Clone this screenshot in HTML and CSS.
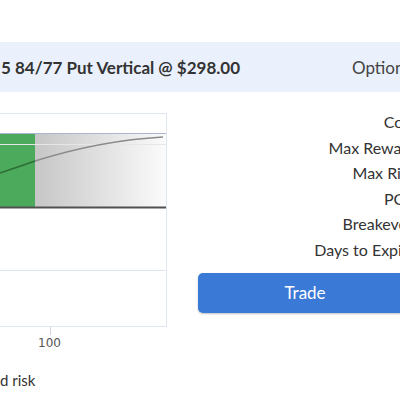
FILE: index.html
```html
<!DOCTYPE html>
<html lang="en">

<head>
    <meta charset="UTF-8">
    <meta name="viewport" content="width=device-width, initial-scale=1.0">
    <title>Put Vertical</title>
    <link rel="stylesheet" href="styles.css">
</head>

<body>
    <div class="page">
        <div class="trade-head">
            <span class="trade-title">5 84/77 Put Vertical @ $298.00</span>
            <span class="trade-type">Options</span>
        </div>

        <div class="trade-body">
            <div class="chart-col">
                <div class="chart-frame">
                    <svg width="166" height="212" viewBox="0 0 166 212">
                        <defs>
                            <linearGradient id="fade" x1="0" y1="0" x2="1" y2="0">
                                <stop offset="0" stop-color="#c6c6c6"/>
                                <stop offset="1" stop-color="#fbfbfb"/>
                            </linearGradient>
                        </defs>
                        <rect x="35" y="19" width="131" height="75" fill="url(#fade)"/>
                        <rect x="0" y="19" width="35" height="75" fill="#4caa5c"/>
                        <line x1="0" y1="19.5" x2="166" y2="19.5" stroke="#aab4d2"/>
                        <line x1="0" y1="30.5" x2="166" y2="30.5" stroke="#e6e6e6"/>
                        <line x1="0" y1="156.5" x2="166" y2="156.5" stroke="#dfe5ee"/>
                        <path d="M0 59 C 12 55, 24 51, 35 47" fill="none" stroke="#2c6d37" stroke-width="1.5"/>
                        <path d="M35 47 C 70 36, 110 26, 163 23" fill="none" stroke="#8a8a8a" stroke-width="1.5"/>
                        <line x1="0" y1="93.5" x2="166" y2="93.5" stroke="#505050" stroke-width="2"/>
                    </svg>
                </div>
                <div class="axis">
                    <span class="tick">100</span>
                </div>
                <p class="legend">d risk</p>
            </div>

            <div class="stats-col">
                <ul class="stats">
                    <li>Cost</li>
                    <li>Max Reward</li>
                    <li>Max Risk</li>
                    <li>POP</li>
                    <li>Breakeven</li>
                    <li>Days to Expiry</li>
                </ul>
                <button class="trade-btn">Trade</button>
            </div>
        </div>
    </div>
</body>

</html>
```

FILE: styles.css
```css
body {
    margin: 0;
    font-family: Lato, "Open Sans", sans-serif;
    color: #333;
    background: #fff;
}

.page {
    width: 400px;
    height: 400px;
    overflow: hidden;
}

.trade-head {
    margin-top: 42px;
    height: 50px;
    background-color: #eaf1fc;
    display: grid;
    grid-template-columns: 352px 100px;
    align-items: center;
    white-space: nowrap;
}

.trade-title {
    font-size: 17px;
    font-weight: bold;
    padding-left: 1px;
    padding-top: 1px;
}

.trade-type {
    font-size: 17px;
    color: #444;
}

.trade-body {
    display: grid;
    grid-template-columns: 167px 214px;
    column-gap: 31px;
    margin-top: 17px;
}

.chart-col {
    padding-top: 4px;
}

.chart-frame {
    width: 166px;
    height: 212px;
    border-top: 1px solid #dfe6ef;
    border-right: 1px solid #dfe6ef;
    border-bottom: 1px solid #dfe6ef;
}

.chart-frame svg {
    display: block;
}

.axis {
    position: relative;
    height: 26px;
}

.tick {
    position: absolute;
    left: 38px;
    top: 9px;
    font-family: "DejaVu Sans", sans-serif;
    font-size: 12px;
    color: #555;
}

.tick::before {
    content: "";
    position: absolute;
    left: 12px;
    top: -9px;
    width: 1px;
    height: 8px;
    background: #cfd6e0;
}

.legend {
    margin: 18px 0 0 0;
    font-size: 15px;
    color: #333;
    white-space: nowrap;
}

.stats {
    list-style: none;
    margin: 0 -4px 0 0;
    padding: 0;
    text-align: right;
    font-size: 16px;
    line-height: 25.6px;
    white-space: nowrap;
}

.trade-btn {
    display: block;
    width: 100%;
    height: 40px;
    margin-top: 10px;
    background-color: #3a7ad6;
    color: #fff;
    border: none;
    border-radius: 5px;
    font-family: Lato, sans-serif;
    font-size: 17px;
    box-shadow: 0 1px 2px rgba(0, 0, 0, 0.25);
}
```
